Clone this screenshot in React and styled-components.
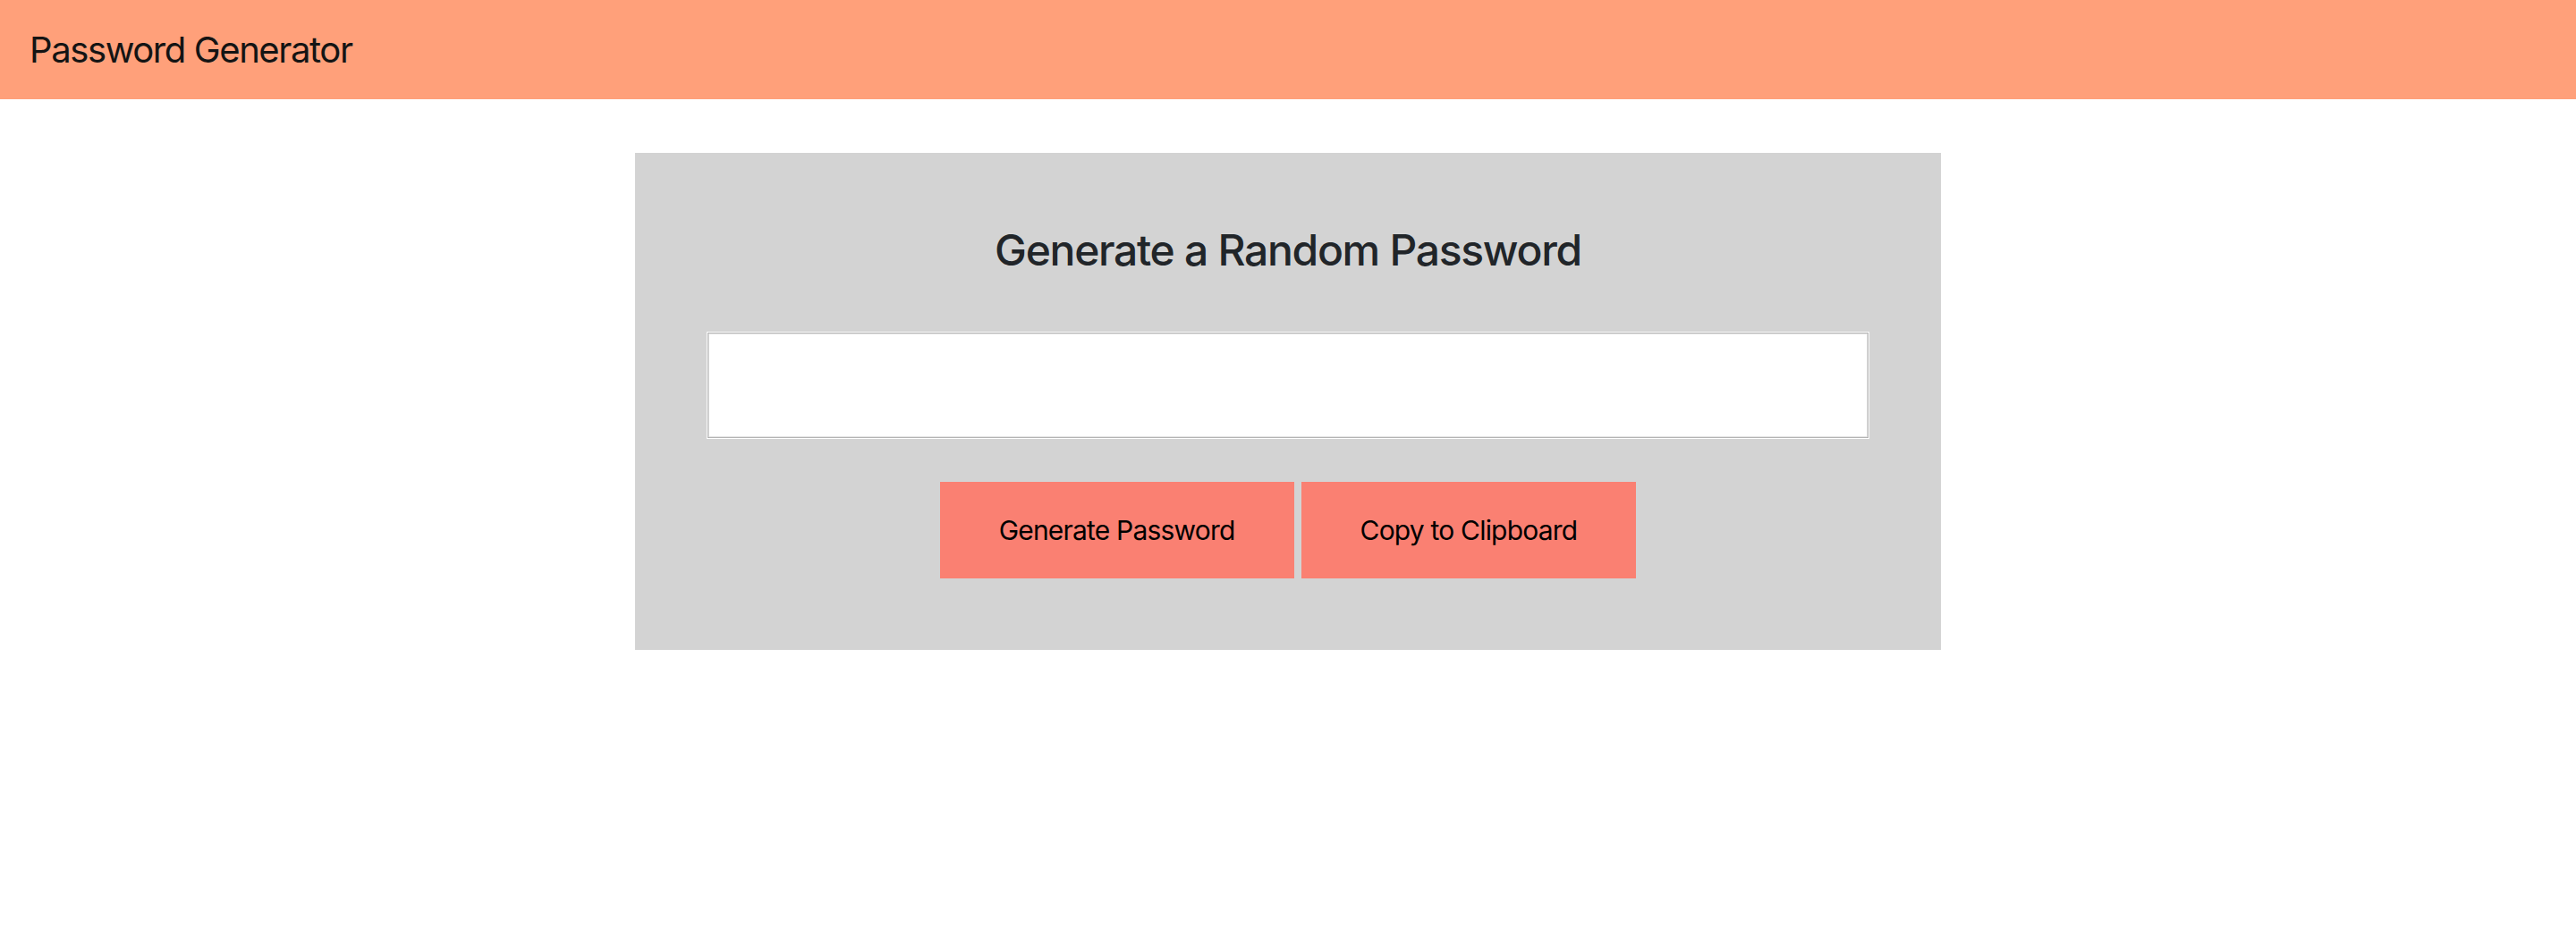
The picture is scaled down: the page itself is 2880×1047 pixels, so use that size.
import React from "react";
import styled, { createGlobalStyle } from "styled-components";

const Global = createGlobalStyle`
  html, body { margin: 0; padding: 0; background: #ffffff; }
  body { font-family: Inter, "Noto Sans", "Liberation Sans", sans-serif; }
  * { box-sizing: border-box; }
`;

const Header = styled.header`
  height: 111px;
  background: #ffa07a;
  display: flex;
  align-items: center;
  padding: 0 33px;
`;

const Brand = styled.h1`
  margin: 0;
  font-size: 40px;
  font-weight: 400;
  letter-spacing: -1.4px;
  color: #141414;
  line-height: 1.2;
`;

const Main = styled.main`
  display: flex;
  justify-content: center;
  padding-top: 60px;
`;

const Card = styled.section`
  width: 1460px;
  background: #d3d3d3;
  padding: 80px;
  display: flex;
  flex-direction: column;
  align-items: center;
`;

const Title = styled.h2`
  margin: 0;
  font-size: 48px;
  font-weight: 500;
  letter-spacing: -1.3px;
  line-height: 58px;
  color: #212529;
`;

const Field = styled.input`
  margin-top: 62px;
  width: 1300px;
  height: 120px;
  background: #ffffff;
  border: 1px solid #ffffff;
  box-shadow: inset 0 0 0 1px #b4b4b4, inset 0 0 0 2px #e2e2e2;
  outline: none;
  font-family: inherit;
  font-size: 32px;
  padding: 0 20px;
`;

const Actions = styled.div`
  margin-top: 48px;
  display: flex;
  gap: 8px;
  justify-content: center;
`;

const Button = styled.button`
  background: #fa8072;
  border: none;
  color: #000000;
  font-family: inherit;
  font-size: 30px;
  letter-spacing: -0.8px;
  line-height: 36px;
  padding: 36px 66px;
  cursor: pointer;
`;

export default function App() {
  return (
    <>
      <Global />
      <Header>
        <Brand>Password Generator</Brand>
      </Header>
      <Main>
        <Card>
          <Title>Generate a Random Password</Title>
          <Field type="text" readOnly />
          <Actions>
            <Button>Generate Password</Button>
            <Button>Copy to Clipboard</Button>
          </Actions>
        </Card>
      </Main>
    </>
  );
}
